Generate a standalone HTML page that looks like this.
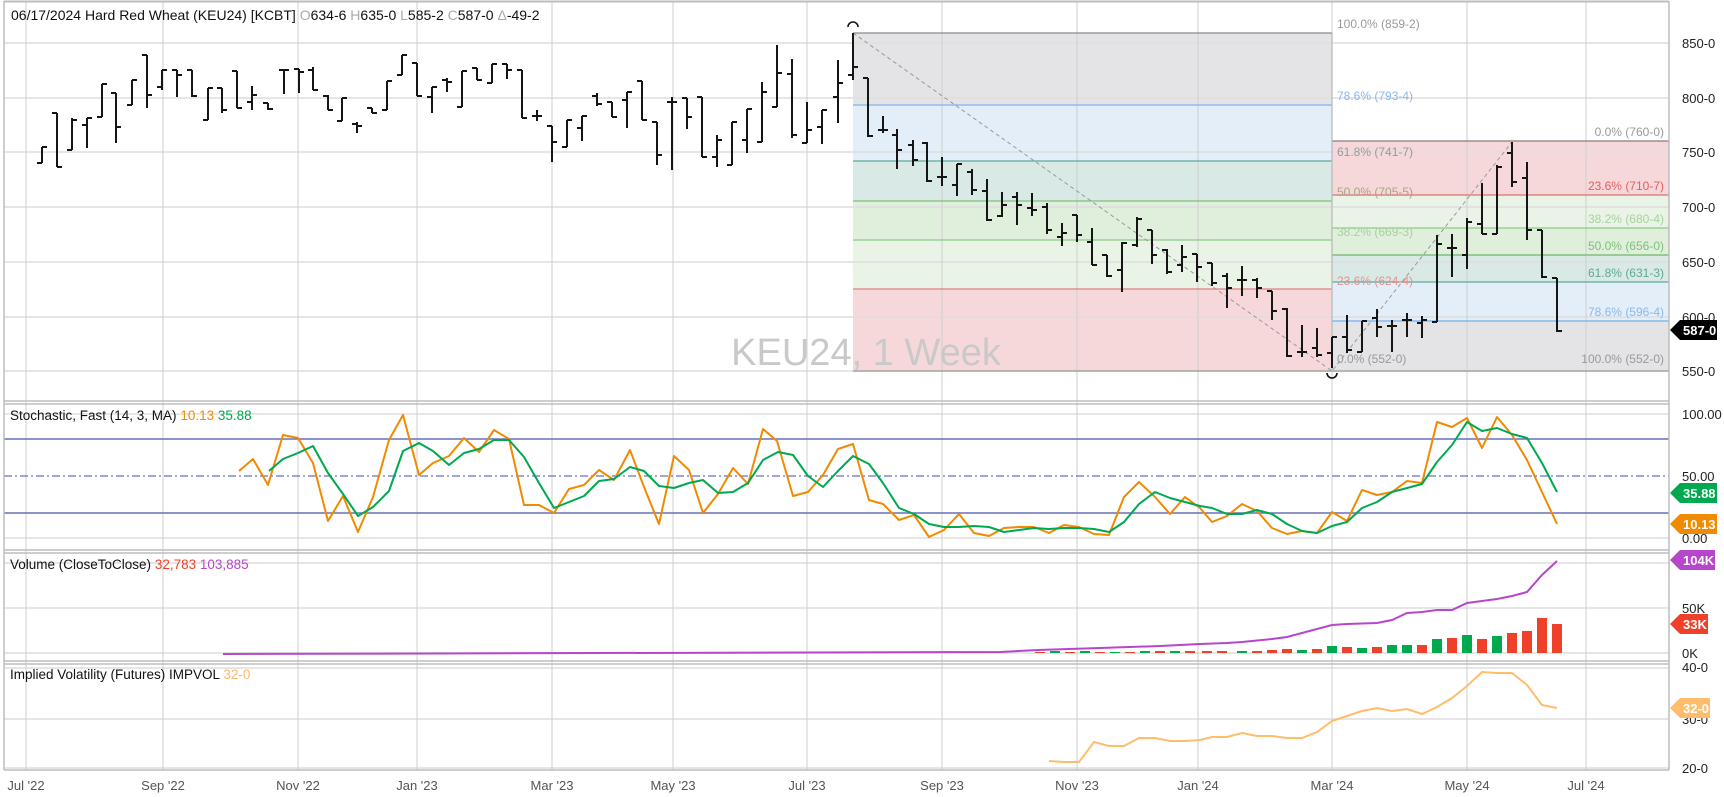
<!DOCTYPE html>
<html><head><meta charset="utf-8"><style>
html,body{margin:0;padding:0;background:#fff;}
svg{display:block;font-family:"Liberation Sans",sans-serif;}
</style></head><body>
<svg width="1724" height="797" viewBox="0 0 1724 797" xmlns="http://www.w3.org/2000/svg">
<rect width="1724" height="797" fill="#fff"/>
<!-- fib 1 regions -->
<rect x="853" y="33" width="479" height="72" fill="#e4e4e6"/>
<rect x="853" y="105" width="479" height="56" fill="#e3eef9"/>
<rect x="853" y="161" width="479" height="40" fill="#d9e9e5"/>
<rect x="853" y="201" width="479" height="39" fill="#e0eedc"/>
<rect x="853" y="240" width="479" height="49" fill="#e9f3e6"/>
<rect x="853" y="289" width="479" height="82" fill="#f7d8da"/>
<!-- fib 2 regions -->
<rect x="1332" y="141" width="337" height="54" fill="#f7d8da"/>
<rect x="1332" y="195" width="337" height="33" fill="#e9f3e6"/>
<rect x="1332" y="228" width="337" height="27" fill="#e0eedc"/>
<rect x="1332" y="255" width="337" height="27" fill="#d9e9e5"/>
<rect x="1332" y="282" width="337" height="39" fill="#e3eef9"/>
<rect x="1332" y="321" width="337" height="50" fill="#e4e4e6"/>
<!-- horizontal grids -->
<g stroke="#dedede" stroke-width="1.5">
<path d="M4 43H1669M4 98H1669M4 152H1669M4 207H1669M4 262H1669M4 317H1669M4 371H1669"/>
<path d="M4 414H1669M4 538H1669M4 563H1669M4 608H1669M4 653H1669M4 668H1669M4 719H1669M4 768H1669"/>
</g>
<!-- vertical grids -->
<g stroke="#cfcfcf" stroke-width="1">
<path d="M26 2V770M163 2V770M298 2V770M417 2V770M552 2V770M673 2V770M807 2V770M942 2V770M1077 2V770M1198 2V770M1332 2V770M1467 2V770M1586 2V770"/>
</g>
<!-- fib lines -->
<g stroke-width="1.3">
<path d="M853 33H1332" stroke="#8a8a8a"/>
<path d="M853 105H1332" stroke="#7fb3e8"/>
<path d="M853 161H1332" stroke="#5fa79a"/>
<path d="M853 201H1332" stroke="#7cc17a"/>
<path d="M853 240H1332" stroke="#8ccb88"/>
<path d="M853 289H1332" stroke="#e08080"/>
<path d="M853 371H1332" stroke="#999"/>
<path d="M1332 141H1669" stroke="#8a7a7a"/>
<path d="M1332 195H1669" stroke="#e07070"/>
<path d="M1332 228H1669" stroke="#8ccb88"/>
<path d="M1332 255H1669" stroke="#6cb86a"/>
<path d="M1332 282H1669" stroke="#5fa79a"/>
<path d="M1332 321H1669" stroke="#6fb0ee"/>
<path d="M1332 371H1669" stroke="#999"/>
<path d="M1332 33V371" stroke="#bbb"/>
</g>
<path d="M853 33L1332 371L1512 142" stroke="#999" stroke-width="1" stroke-dasharray="4 3" fill="none"/>
<!-- fib labels -->
<g font-size="12">
<text x="1337" y="28" fill="#9a9a9a">100.0% (859-2)</text>
<text x="1337" y="100" fill="#8ab8e8">78.6% (793-4)</text>
<text x="1337" y="156" fill="#999">61.8% (741-7)</text>
<text x="1337" y="196" fill="#a5a585">50.0% (705-5)</text>
<text x="1337" y="236" fill="#a8d0a0">38.2% (669-3)</text>
<text x="1337" y="285" fill="#e89090">23.6% (624-4)</text>
<text x="1337" y="363" fill="#999">0.0% (552-0)</text>
<g text-anchor="end">
<text x="1664" y="136" fill="#999">0.0% (760-0)</text>
<text x="1664" y="190" fill="#e06060">23.6% (710-7)</text>
<text x="1664" y="223" fill="#a8d0a0">38.2% (680-4)</text>
<text x="1664" y="250" fill="#7cc17a">50.0% (656-0)</text>
<text x="1664" y="277" fill="#5fa79a">61.8% (631-3)</text>
<text x="1664" y="316" fill="#8ab8e8">78.6% (596-4)</text>
<text x="1664" y="363" fill="#999">100.0% (552-0)</text>
</g></g>
<text x="866" y="365" font-size="38" fill="#c9c9c9" text-anchor="middle">KEU24, 1 Week</text>
<!-- bars -->
<path fill="none" stroke="#151515" stroke-width="2" d="
M42 147V163M37 163H42M42 147H47
M57 113V167M52 113H57M57 167H62
M72 118V150M67 150H72M72 120H77
M87 118V148M82 125H87M87 118H92
M102 84V117M97 117H102M102 84H107
M116 93V143M111 93H116M116 127H121
M132 80V105M127 105H132M132 80H137
M147 55V108M142 55H147M147 95H152
M162 70V90M157 87H162M162 70H167
M177 70V97M172 70H177M177 75H182
M192 70V97M187 70H192M192 96H197
M208 88V120M203 120H208M208 88H213
M222 88V113M217 88H222M222 110H227
M237 71V108M232 71H237M237 108H242
M252 86V110M247 102H252M252 95H257
M268 103V110M263 103H268M268 109H273
M284 70V94M279 70H284M284 70H289
M299 69V93M294 69H299M299 72H304
M313 67V90M308 70H313M313 90H318
M328 95V110M323 96H328M328 110H333
M342 98V121M337 121H342M342 98H347
M357 122V133M352 124H357M357 126H362
M372 108V113M367 108H372M372 113H377
M387 81V110M382 110H387M387 81H392
M402 55V75M397 75H402M402 55H407
M417 63V96M412 63H417M417 96H422
M432 87V113M427 97H432M432 87H437
M447 78V92M442 80H447M447 82H452
M462 71V107M457 107H462M462 71H467
M477 68V80M472 68H477M477 80H482
M492 64V83M487 83H492M492 64H497
M507 64V79M502 64H507M507 70H512
M522 70V118M517 70H522M522 118H527
M537 110V121M532 116H537M537 116H542
M552 126V162M547 126H552M552 142H557
M567 120V147M562 147H567M567 120H572
M582 116V141M577 128H582M582 116H587
M597 93V106M592 96H597M597 104H602
M612 102V117M607 102H612M612 117H617
M627 92V128M622 100H627M627 92H632
M642 81V120M637 81H642M642 120H647
M657 122V165M652 122H657M657 155H662
M672 97V170M667 102H672M672 102H677
M687 98V129M682 98H687M687 117H692
M702 97V157M697 97H702M702 157H707
M717 135V167M712 157H717M717 140H722
M732 122V165M727 165H732M732 122H737
M747 109V153M742 140H747M747 109H752
M762 82V142M757 142H762M762 92H767
M777 45V107M772 107H777M777 73H782
M792 59V138M787 74H792M792 135H797
M807 102V143M802 143H807M807 130H812
M822 110V144M817 127H822M822 110H827
M838 60V123M833 97H838M838 83H843
M853 33V80M848 75H853M853 67H858
M868 78V137M863 78H868M868 136H873
M883 116V133M878 130H883M883 130H888
M897 129V169M892 135H897M897 150H902
M913 140V166M908 145H913M913 160H918
M927 142V182M922 143H927M927 181H932
M942 157V186M937 177H942M942 177H947
M957 164V196M952 185H957M957 164H962
M972 169V195M967 172H972M972 190H977
M987 179V221M982 191H987M987 220H992
M1002 192V217M997 216H1002M1002 205H1007
M1017 192V225M1012 197H1017M1017 205H1022
M1032 193V216M1027 208H1032M1032 210H1037
M1047 203V234M1042 207H1047M1047 230H1052
M1062 223V246M1057 237H1062M1062 233H1067
M1077 215V242M1072 215H1077M1077 235H1082
M1092 228V265M1087 242H1092M1092 265H1097
M1107 255V277M1102 255H1107M1107 276H1112
M1122 242V292M1117 270H1122M1122 243H1127
M1137 217V247M1132 245H1137M1137 219H1142
M1152 230V264M1147 230H1152M1152 255H1157
M1167 249V274M1162 250H1167M1167 272H1172
M1182 245V272M1177 265H1182M1182 257H1187
M1197 254V282M1192 254H1197M1197 267H1202
M1212 263V286M1207 263H1212M1212 283H1217
M1227 273V308M1222 276H1227M1227 288H1232
M1242 266V296M1237 280H1242M1242 280H1247
M1257 278V298M1252 280H1257M1257 288H1262
M1272 291V320M1267 291H1272M1272 311H1277
M1287 308V357M1282 309H1287M1287 356H1292
M1302 325V357M1297 352H1302M1302 352H1307
M1317 328V357M1312 348H1317M1317 355H1322
M1332 337V368M1327 353H1332M1332 337H1337
M1347 315V353M1342 337H1347M1347 350H1352
M1362 321V352M1357 352H1362M1362 321H1367
M1377 309V337M1372 318H1377M1377 327H1382
M1392 320V352M1387 326H1392M1392 326H1397
M1407 313V337M1402 320H1407M1407 320H1412
M1422 316V338M1417 323H1422M1422 320H1427
M1437 235V322M1432 322H1437M1437 244H1442
M1452 234V277M1447 248H1452M1452 248H1457
M1467 218V269M1462 255H1467M1467 222H1472
M1482 183V234M1477 224H1482M1482 234H1487
M1497 165V234M1492 234H1497M1497 167H1502
M1512 142V187M1507 153H1512M1512 182H1517
M1527 162V240M1522 178H1527M1527 230H1532
M1542 230V278M1537 230H1542M1542 277H1547
M1557 278V332M1552 278H1557M1557 331H1562"/>
<path d="M848 27A5 5 0 0 1 858 27" stroke="#111" stroke-width="1.6" fill="none"/>
<path d="M1327 373A5 5 0 0 0 1337 373" stroke="#111" stroke-width="1.6" fill="none"/>
<!-- stochastic -->
<path d="M4 439H1669M4 513H1669" stroke="#6670b8" stroke-width="1.5"/>
<path d="M4 476H1669" stroke="#6670c8" stroke-width="1.2" stroke-dasharray="8 3 2 3"/>
<polyline fill="none" stroke="#f08a00" stroke-width="2" stroke-linejoin="round" points="239,471 253,459 268,485 283,435 298,438 313,463 328,521 343,496 358,532 373,497 389,440 403,415 419,475 433,463 449,456 464,438 479,452 494,430 509,439 524,505 539,505 554,513 569,489 584,485 599,470 614,480 630,450 644,487 659,524 674,456 689,470 703,513 718,494 733,468 748,484 763,429 777,441 793,496 808,492 823,475 838,449 853,444 869,500 883,504 899,520 914,515 929,537 944,530 959,514 974,533 989,536 1004,528 1019,527 1034,527 1049,533 1064,525 1079,527 1094,534 1109,535 1124,497 1139,482 1155,497 1170,514 1185,497 1200,508 1212,522 1227,516 1242,504 1257,511 1272,528 1287,534 1302,531 1317,533 1332,512 1347,521 1362,490 1377,495 1392,492 1407,481 1422,483 1437,422 1452,427 1467,418 1482,448 1497,417 1512,435 1527,460 1542,492 1557,524"/>
<polyline fill="none" stroke="#00a84f" stroke-width="2" stroke-linejoin="round" points="269,471 283,459 298,453 313,446 328,473 343,494 358,516 373,507 389,491 403,451 419,443 433,451 449,465 464,453 479,449 494,440 509,440 524,457 539,483 554,508 569,502 584,496 599,481 614,479 630,467 644,471 659,486 674,488 689,483 703,480 718,493 733,492 748,483 763,460 778,452 793,455 808,476 823,487 838,471 853,456 869,464 883,483 899,508 914,514 929,524 944,527 959,527 974,526 989,527 1004,532 1019,530 1034,528 1049,529 1064,528 1079,528 1094,529 1109,532 1124,522 1139,504 1155,492 1170,498 1185,502 1200,506 1212,508 1227,514 1242,514 1257,510 1272,514 1287,524 1302,531 1317,533 1332,526 1347,522 1362,508 1377,502 1392,492 1407,488 1422,484 1437,462 1452,445 1467,422 1482,431 1497,428 1512,434 1527,438 1542,463 1557,492"/>
<!-- volume bars -->
<g fill="#ef4129">
<rect x="1035" y="652" width="10" height="1"/><rect x="1065" y="652" width="10" height="1"/><rect x="1095" y="652" width="10" height="1"/><rect x="1125" y="652" width="10" height="1"/><rect x="1155" y="651" width="10" height="2"/><rect x="1185" y="651" width="10" height="2"/>
<rect x="1202" y="651" width="10" height="2"/><rect x="1217" y="651" width="10" height="2"/><rect x="1252" y="651" width="10" height="2"/><rect x="1267" y="650" width="10" height="3"/><rect x="1282" y="649" width="10" height="4"/><rect x="1312" y="649" width="10" height="4"/><rect x="1342" y="647" width="10" height="6"/><rect x="1372" y="647" width="10" height="6"/><rect x="1417" y="645" width="10" height="8"/><rect x="1447" y="638" width="10" height="15"/><rect x="1477" y="639" width="10" height="14"/><rect x="1507" y="633" width="10" height="20"/><rect x="1522" y="631" width="10" height="22"/><rect x="1537" y="618" width="10" height="35"/><rect x="1552" y="624" width="10" height="29"/>
</g>
<g fill="#00a84f">
<rect x="1050" y="651" width="10" height="2"/><rect x="1080" y="651" width="10" height="2"/><rect x="1110" y="652" width="10" height="1"/><rect x="1140" y="651" width="10" height="2"/><rect x="1170" y="651" width="10" height="2"/>
<rect x="1237" y="651" width="10" height="2"/><rect x="1297" y="650" width="10" height="3"/><rect x="1327" y="646" width="10" height="7"/><rect x="1357" y="648" width="10" height="5"/><rect x="1387" y="645" width="10" height="8"/><rect x="1402" y="645" width="10" height="8"/><rect x="1432" y="639" width="10" height="14"/><rect x="1462" y="635" width="10" height="18"/><rect x="1492" y="636" width="10" height="17"/>
</g>
<polyline fill="none" stroke="#b646cc" stroke-width="2" points="223,654 1000,652 1038,650 1100,648 1160,646 1200,644 1227,643 1242,642 1272,639 1287,637 1302,633 1317,629 1332,625 1347,624 1377,623 1392,620 1407,613 1422,612 1437,610 1452,610 1467,603 1482,601 1497,599 1512,596 1527,592 1542,575 1557,561"/>
<!-- IV -->
<polyline fill="none" stroke="#ffbd6c" stroke-width="2" points="1049,761 1064,762 1079,762 1094,742 1109,746 1124,746 1139,738 1155,738 1170,741 1185,741 1200,740 1212,737 1227,737 1242,733 1257,736 1272,736 1287,738 1302,738 1317,732 1332,721 1347,716 1362,711 1377,708 1392,711 1407,709 1422,714 1437,707 1452,698 1467,686 1482,672 1497,673 1512,673 1527,685 1542,705 1557,708"/>
<!-- panel borders -->
<g stroke="#bdbdbd" fill="none">
<path d="M4 1.5H1669" stroke-width="2"/>
<path d="M4 401H1669M4 404H1669M4 550H1669M4 553H1669M4 661H1669M4 664H1669" stroke-width="1.5"/>
<path d="M4 770H1669" stroke-width="1.5"/>
<path d="M4 1V770M1669 1V770" stroke-width="1.5"/>
</g>
<!-- headers -->
<text x="11" y="20" font-size="14" fill="#111">06/17/2024 Hard Red Wheat (KEU24) [KCBT] <tspan fill="#aaa">O</tspan>634-6 <tspan fill="#aaa">H</tspan>635-0 <tspan fill="#aaa">L</tspan>585-2 <tspan fill="#aaa">C</tspan>587-0 <tspan fill="#aaa">Δ</tspan>-49-2</text>
<text x="10" y="420" font-size="13.5" fill="#111">Stochastic, Fast  (14, 3, MA) <tspan fill="#f08a00">10.13</tspan> <tspan fill="#00a84f">35.88</tspan></text>
<text x="10" y="569" font-size="13.5" fill="#111">Volume  (CloseToClose) <tspan fill="#ef4129">32,783</tspan> <tspan fill="#b646cc">103,885</tspan></text>
<text x="10" y="679" font-size="13.5" fill="#111">Implied Volatility (Futures) IMPVOL <tspan fill="#ffb860">32-0</tspan></text>
<!-- axis labels -->
<g font-size="13" fill="#222">
<text x="1682" y="48">850-0</text><text x="1682" y="103">800-0</text><text x="1682" y="157">750-0</text><text x="1682" y="212">700-0</text><text x="1682" y="267">650-0</text><text x="1682" y="322">600-0</text><text x="1682" y="376">550-0</text>
<text x="1682" y="419">100.00</text><text x="1682" y="481">50.00</text><text x="1682" y="543">0.00</text>
<text x="1682" y="613">50K</text><text x="1682" y="658">0K</text>
<text x="1682" y="672">40-0</text><text x="1682" y="724">30-0</text><text x="1682" y="773">20-0</text>
</g>
<g font-size="13" fill="#555" text-anchor="middle">
<text x="26" y="790">Jul '22</text><text x="163" y="790">Sep '22</text><text x="298" y="790">Nov '22</text><text x="417" y="790">Jan '23</text><text x="552" y="790">Mar '23</text><text x="673" y="790">May '23</text><text x="807" y="790">Jul '23</text><text x="942" y="790">Sep '23</text><text x="1077" y="790">Nov '23</text><text x="1198" y="790">Jan '24</text><text x="1332" y="790">Mar '24</text><text x="1467" y="790">May '24</text><text x="1586" y="790">Jul '24</text>
</g>
<!-- tags -->
<g font-size="13" font-weight="bold" fill="#fff">
<polygon points="1670,330 1680,320 1717,320 1717,340 1680,340" fill="#000"/><text x="1683" y="335">587-0</text>
<polygon points="1670,493 1680,483 1717,483 1717,503 1680,503" fill="#00a84f"/><text x="1683" y="498">35.88</text>
<polygon points="1670,524 1680,514 1717,514 1717,534 1680,534" fill="#f08a00"/><text x="1683" y="529">10.13</text>
<polygon points="1670,560 1680,550 1715,550 1715,570 1680,570" fill="#b646cc"/><text x="1683" y="565">104K</text>
<polygon points="1670,624 1680,614 1708,614 1708,634 1680,634" fill="#ef4129"/><text x="1683" y="629">33K</text>
<polygon points="1670,708 1680,698 1710,698 1710,718 1680,718" fill="#ffbd6c"/><text x="1683" y="713">32-0</text>
</g>
</svg>
</body></html>
